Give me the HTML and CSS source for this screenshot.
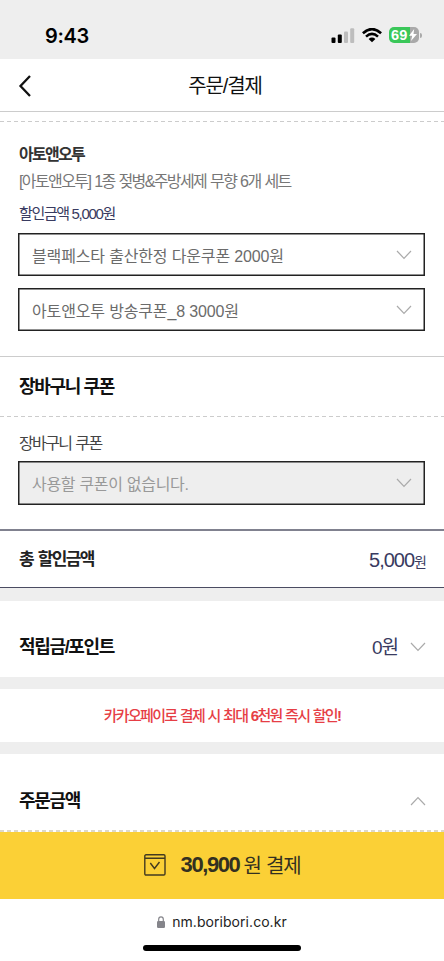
FILE: index.html
```html
<!DOCTYPE html>
<html lang="ko">
<head>
<meta charset="utf-8">
<title>주문/결제</title>
<link rel="stylesheet" href="styles.css">
</head>
<body>
<div class="status">
  <span class="clock">9:43</span>
  <div class="indicators">
    <svg class="signal" width="24" height="16" viewBox="0 0 24 16"><rect x="0.5" y="9.5" width="4" height="5.5" rx="1"/><rect x="6.8" y="6.5" width="4" height="8.5" rx="1"/><g fill="#bdbdbd"><rect x="13" y="3.5" width="4" height="11.5" rx="1"/><rect x="19.2" y="0.3" width="4" height="14.7" rx="1"/></g></svg>
    <svg class="wifi" width="20" height="15" viewBox="0 0 20 15"><g fill="none" stroke="#000" stroke-width="2.6"><path d="M.9 5.2Q10-3 19.1 5.2"/><path d="M4 8.6Q10 3.2 16 8.6"/></g><path d="M6.6 10.9Q10 8 13.4 10.9L10 14.3Z"/></svg>
    <div class="battery"><span class="level">69</span><svg width="8" height="12" viewBox="0 0 8 12"><path d="M5.2 0 0 6.8h3.2L2 12l6-7H4.5Z" fill="#fff"/></svg></div><i class="cap"></i>
  </div>
</div>
<header class="header">
  <svg class="back" width="14" height="24" viewBox="0 0 14 24"><path d="M12 2 2.5 12 12 22" fill="none" stroke="#111" stroke-width="2.3"/></svg>
  <h1>주문/결제</h1>
</header>
<main>
  <section class="product">
    <b class="brand">아토앤오투</b>
    <p class="name">[아토앤오투] 1종 젖병&amp;주방세제 무향 6개 세트</p>
    <p class="discount">할인금액 5,000원</p>
    <div class="select"><span>블랙페스타 출산한정 다운쿠폰 2000원</span><svg class="arrow" viewBox="0 0 16 10"><path d="m1 1 7 7.3L15 1"/></svg></div>
    <div class="select"><span>아토앤오투 방송쿠폰_8 3000원</span><svg class="arrow" viewBox="0 0 16 10"><path d="m1 1 7 7.3L15 1"/></svg></div>
  </section>
  <section class="cart-title"><h2>장바구니 쿠폰</h2></section>
  <section class="cart">
    <p class="label">장바구니 쿠폰</p>
    <div class="select disabled"><span>사용할 쿠폰이 없습니다.</span><svg class="arrow" viewBox="0 0 16 10"><path d="m1 1 7 7.3L15 1"/></svg></div>
  </section>
  <section class="total"><h3>총 할인금액</h3><p class="sum">5,000<small>원</small></p></section>
  <section class="points"><h2>적립금/포인트</h2><div class="value"><span>0원</span><svg class="arrow" viewBox="0 0 16 10"><path d="m1 1 7 7.3L15 1"/></svg></div></section>
  <p class="promo">카카오페이로 결제 시 최대 <b>6</b>천원 즉시 할인<b>!</b></p>
  <section class="order"><h2>주문금액</h2><svg class="arrow" viewBox="0 0 16 10"><path d="m1 9 7-7.3L15 9"/></svg></section>
</main>
<button class="pay">
  <svg width="22" height="22" viewBox="0 0 22 22"><g fill="none" stroke="#433a20" stroke-width="1.4"><rect x=".8" y=".8" width="20.2" height="20.2" rx="1.2"/><path d="M1 4.2h20M6.3 9l4.2 5.5 5-6.5"/></g></svg>
  <b>30,900</b><span>원 결제</span>
</button>
<footer>
  <div class="address"><svg width="8" height="12" viewBox="0 0 8 12"><rect y="5" width="8" height="7" rx="1.2" fill="#85858b"/><path d="M1.7 5.5V3.2a2.3 2.3 0 0 1 4.6 0v2.3" fill="none" stroke="#85858b" stroke-width="1.2"/></svg><span>nm.boribori.co.kr</span></div>
  <div class="home"></div>
</footer>
</body>
</html>
```
FILE: styles.css
```css
* { box-sizing: border-box; margin: 0; padding: 0; }
body {
  width: 444px; height: 961px; overflow: hidden; background: #fff; color: #333;
  font-family: "Liberation Sans", "Noto Sans CJK KR", sans-serif;
  display: flex; flex-direction: column; white-space: nowrap;
}
.status { height: 59px; background: #eee; display: flex; justify-content: space-between; padding: 23px 22px 0 45px; }
.clock { font: 600 20px/27px Inter, sans-serif; color: #000; letter-spacing: -.3px; }
.indicators { display: flex; align-items: flex-start; padding-top: 4px; }
.signal { margin: 1px 7px 0 0; }
.wifi { margin: 1px 7px 0 0; }
.battery { display: flex; align-items: center; width: 30px; height: 16px; border-radius: 5px; background: linear-gradient(90deg, #3ac759 21px, #a9a9a9 21px); padding-left: 2px; }
.level { font: 700 14.5px/16px "Liberation Sans", sans-serif; color: #fff; letter-spacing: .2px; margin-right: 1px; }
.cap { width: 2px; height: 5px; margin: 6px 0 0 1px; border-radius: 0 2px 2px 0; background: #aaa; }
.header { height: 53px; display: grid; grid-template-columns: 44px 1fr 44px; align-items: center; border-bottom: 1px solid #ccc; }
.back { margin: 3px 0 0 18px; }
h1 { text-align: center; font-size: 20px; font-weight: 400; line-height: 26px; letter-spacing: -1.1px; color: #111; padding: 2px 0 0 6px; }
.product { margin-top: 9px; height: 235px; padding: 22px 19px 0 18px; }
.product, .cart { background: repeating-linear-gradient(90deg, #ccc 0 4px, transparent 4px 7px) 0 0 / 100% 1px no-repeat; }
.brand, .name, .discount, .label, h2, h3 { padding-left: 1px; }
.brand { display: block; font-size: 16px; line-height: 24px; letter-spacing: -1.7px; }
.name { font-size: 16px; line-height: 30px; letter-spacing: -1.6px; word-spacing: 1px; color: #777; }
.discount { font-size: 15px; line-height: 34px; letter-spacing: -1.35px; color: #393b61; margin-bottom: 2px; }
.select { height: 43px; border: 1px solid #222; box-shadow: inset 0 0 0 .5px #222; margin-bottom: 12px; padding: 1px 12px 0 13px; display: flex; align-items: center; justify-content: space-between; font-size: 16px; letter-spacing: -.15px; color: #6b6b6b; }
.arrow { display: block; width: 16px; height: 10px; fill: none; stroke: #aaa; stroke-width: 1.2; }
.cart-title { height: 60px; border-top: 1px solid #ccc; padding: 2px 0 0 18px; display: flex; align-items: center; }
h2 { font-size: 18px; line-height: 26px; letter-spacing: -1.35px; color: #111; }
.cart { height: 113px; padding: 15px 19px 0 18px; }
.label { font-size: 16px; line-height: 26px; letter-spacing: -1.6px; word-spacing: 1px; margin-bottom: 4px; color: #444; }
.disabled { height: 44px; background: #eee; color: #999; letter-spacing: -.3px; }
.total { height: 59px; border-top: 2px solid #80818f; border-bottom: 1px solid #4b4c62; display: flex; align-items: center; justify-content: space-between; padding: 0 18px; }
h3 { font-size: 17px; letter-spacing: -1.6px; word-spacing: 1.5px; color: #222; padding-bottom: 2px; }
.sum { font-size: 20px; letter-spacing: -1px; color: #393b61; padding-top: 3px; }
.sum small { font-size: 14px; }
.points { height: 101px; border: solid #eee; border-width: 13px 0 12px; display: flex; align-items: center; justify-content: space-between; padding: 16px 18px 0; }
.value { display: flex; align-items: center; gap: 12px; font-size: 19px; letter-spacing: -1px; color: #393b61; }
.value span { margin-top: -2px; }
.promo { height: 65px; border-bottom: 12px solid #eee; text-align: center; font-size: 15px; line-height: 53px; font-weight: 500; letter-spacing: -1.7px; word-spacing: 1px; color: #e63e45; }
.order { height: 78px; display: flex; align-items: center; justify-content: space-between; padding: 16px 18px 0; background: repeating-linear-gradient(90deg, #ddd8c8 0 4px, transparent 4px 7px) 0 100% / 100% 2px no-repeat; }
.pay { height: 68px; border: 0; background: #fbd036; display: flex; align-items: center; justify-content: center; font-family: inherit; color: #333021; }
.pay b { font-size: 22px; letter-spacing: -1.4px; margin: 0 4px 0 15px; }
.pay span { font-size: 20px; letter-spacing: -1.2px; word-spacing: 1px; padding-bottom: 2px; }
footer { height: 62px; display: flex; flex-direction: column; align-items: center; padding-top: 14px; }
.address { display: flex; align-items: center; gap: 7px; font: 14px/18px Inter, sans-serif; letter-spacing: .05px; color: #222; }
.home { width: 158px; height: 6px; border-radius: 3px; background: #000; margin-top: 14px; }
```
